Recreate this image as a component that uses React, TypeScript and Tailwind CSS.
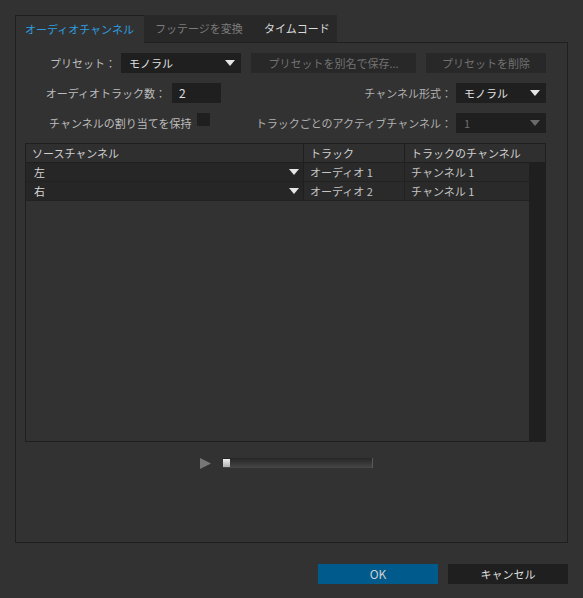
import React from "react";

function Tri({ color = "#e6e6e6" }: { color?: string }) {
  return (
    <svg width="10" height="6" viewBox="0 0 10 6" className="shrink-0">
      <polygon points="0,0 10,0 5,6" fill={color} />
    </svg>
  );
}

function Dropdown({ value, w, disabled }: { value: string; w: string; disabled?: boolean }) {
  return (
    <div
      className={`${w} h-[20px] bg-[#1f1f1f] flex items-center justify-between pl-[8px] pr-[6px] ${
        disabled ? "text-[#6e6e6e]" : "text-[#e0e0e0]"
      }`}
    >
      <span>{value}</span>
      <Tri color={disabled ? "#6a6a6a" : "#e6e6e6"} />
    </div>
  );
}

export default function App() {
  return (
    <div className="w-[583px] h-[598px] bg-[#323232] font-['Noto_Sans_CJK_JP',sans-serif] text-[11px] leading-none text-[#bcbcbc] pt-[15px] pl-[15px] pr-[15px] flex flex-col">
      {/* Tabs */}
      <div className="flex h-[28px]">
        <div className="w-[129px] h-[28px] bg-[#323232] border-l border-t border-[#1f1f1f] flex items-center pl-[9px] text-[#2e9ee0]">
          オーディオチャンネル
        </div>
        <div className="w-[110px] h-[28px] bg-[#282828] border-b border-[#1f1f1f] flex items-center pl-[11px] text-[#7c7c7c]">
          フッテージを変換
        </div>
        <div className="w-[83px] h-[28px] bg-[#282828] border-b border-[#1f1f1f] flex items-center pl-[10px] text-[#dadada]">
          タイムコード
        </div>
        <div className="flex-1 h-[28px] border-b border-[#1f1f1f]" />
      </div>

      {/* Panel */}
      <div className="w-[553px] h-[500px] border-l border-r border-b border-[#1f1f1f] flex flex-col pt-[10px] pr-[21px]">
        {/* Row 1 */}
        <div className="flex items-center h-[20px]">
          <div className="w-[100px] text-right">プリセット：</div>
          <div className="ml-[5px]">
            <Dropdown value="モノラル" w="w-[120px]" />
          </div>
          <div className="ml-[10px] w-[165px] h-[20px] bg-[#282828] text-[#727272] flex items-center justify-center">
            プリセットを別名で保存...
          </div>
          <div className="ml-[10px] w-[120px] h-[20px] bg-[#282828] text-[#727272] flex items-center justify-center">
            プリセットを削除
          </div>
        </div>

        {/* Row 2 */}
        <div className="flex items-center h-[20px] mt-[10px]">
          <div className="w-[150px] text-right">オーディオトラック数：</div>
          <div className="ml-[6px] w-[49px] h-[20px] bg-[#1f1f1f] text-[#e0e0e0] flex items-center pl-[7px] text-[12px]">
            2
          </div>
          <div className="flex-1 flex items-center justify-end">
            <span className="text-[#b0b0b0]">チャンネル形式：</span>
            <div className="ml-[4px]">
              <Dropdown value="モノラル" w="w-[90px]" />
            </div>
          </div>
        </div>

        {/* Row 3 */}
        <div className="flex items-start h-[20px] mt-[10px]">
          <div className="pl-[33px] h-[20px] flex items-center">チャンネルの割り当てを保持</div>
          <div className="ml-[6px] w-[13px] h-[13px] bg-[#1f1f1f]" />
          <div className="flex-1 flex items-center justify-end">
            <span className="text-[#b0b0b0]">トラックごとのアクティブチャンネル：</span>
            <div className="ml-[4px]">
              <Dropdown value="1" w="w-[90px]" disabled />
            </div>
          </div>
        </div>

        {/* Table */}
        <div className="ml-[9px] mt-[10px] w-[521px] h-[299px] border border-[#1f1f1f] flex flex-col bg-[#323232]">
          <div className="flex h-[19px] bg-[#2f2f2f] border-b border-[#1f1f1f] text-[#cfcfcf] shrink-0">
            <div className="w-[278px] border-r border-[#1f1f1f] flex items-center pl-[6px]">ソースチャンネル</div>
            <div className="w-[101px] border-r border-[#1f1f1f] flex items-center pl-[6px]">トラック</div>
            <div className="flex-1 flex items-center pl-[6px]">トラックのチャンネル</div>
          </div>
          <div className="flex flex-1">
            <div className="flex-1 flex flex-col">
              {[
                ["左", "オーディオ 1", "チャンネル 1"],
                ["右", "オーディオ 2", "チャンネル 1"],
              ].map((r, i) => (
                <div key={i} className="flex h-[19px] border-b border-[#222222] text-[#d6d6d6]">
                  <div className="w-[278px] bg-[#262626] border-r border-[#1f1f1f] flex items-center justify-between pl-[8px] pr-[4px]">
                    <span>{r[0]}</span>
                    <Tri />
                  </div>
                  <div className="w-[101px] bg-[#2a2a2a] border-r border-[#222222] flex items-center pl-[6px] text-[#c4c4c4]">
                    {r[1]}
                  </div>
                  <div className="flex-1 bg-[#2a2a2a] flex items-center pl-[6px] text-[#c4c4c4]">{r[2]}</div>
                </div>
              ))}
            </div>
            <div className="w-[16px] bg-[#1f1f1f]" />
          </div>
        </div>

        {/* Player */}
        <div className="flex items-center mt-[15px] h-[12px] ml-[184px]">
          <svg width="11" height="11" viewBox="0 0 11 11">
            <polygon points="0,0 11,5.5 0,11" fill="#777777" />
          </svg>
          <div className="ml-[12px] w-[150px] h-[10px] bg-gradient-to-b from-[#262626] to-[#474747] border-r border-[#5a5a5a] flex items-center">
            <div className="w-[7px] h-[8px] bg-gradient-to-b from-[#f0f0f0] to-[#b0b0b0]" />
          </div>
        </div>
      </div>

      {/* Buttons */}
      <div className="flex justify-end mt-[21px] gap-[10px]">
        <div className="w-[120px] h-[20px] bg-[#005a8b] text-[#d0d0d0] text-[12px] flex items-center justify-center">
          OK
        </div>
        <div className="w-[120px] h-[20px] bg-[#1f1f1f] text-[#dedede] flex items-center justify-center">
          キャンセル
        </div>
      </div>
    </div>
  );
}
